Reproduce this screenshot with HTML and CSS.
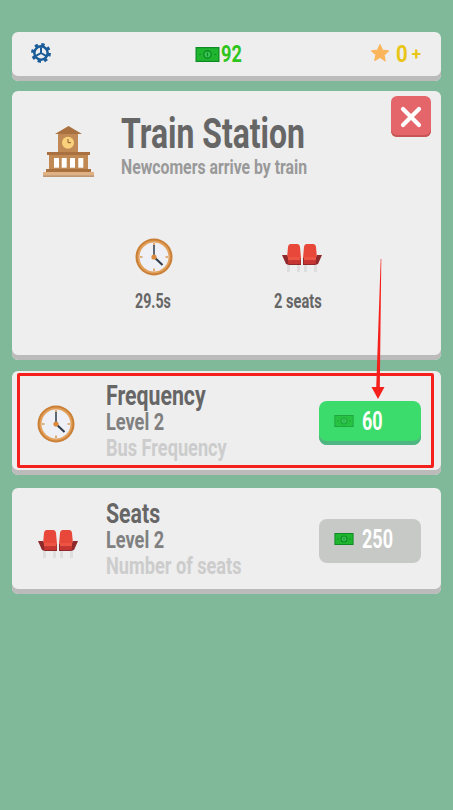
FILE: index.html
```html
<!DOCTYPE html>
<html lang="en">
<head>
  <meta charset="UTF-8" />
  <meta name="viewport" content="width=device-width, initial-scale=1.0"/>
  <title>Train Station</title>
  <link rel="stylesheet" href="styles.css">
</head>
<body>
  <!-- shared icons -->
  <svg class="defs" width="0" height="0">
    <symbol id="money" viewBox="0 0 24 15">
      <rect width="24" height="15" fill="#0f8a24"/>
      <rect x="1.2" y="1.2" width="21.6" height="12.600" fill="#1fb52f"/>
      <circle cx="12" cy="7.500" r="4.400" fill="#0f8a24"/>
      <circle cx="12" cy="7.500" r="3" fill="#38c653"/>
      <rect x="11.400" y="5.600" width="1.200" height="3.800" fill="#0f8a24"/>
      <circle cx="4.500" cy="7.500" r=".8" fill="#0f8a24"/>
      <circle cx="19.500" cy="7.500" r=".8" fill="#0f8a24"/>
    </symbol>
    <symbol id="clock" viewBox="0 0 38 38">
      <circle cx="19" cy="19" r="18.500" fill="#c97f35"/>
      <circle cx="19" cy="19" r="16.500" fill="#e2a05c"/>
      <circle cx="19" cy="19" r="14.500" fill="#eef0f6"/>
      <path d="M19 5v2.500M19 30.500V33M5 19h2.500M30.500 19H33" stroke="#d99a58" stroke-width="1.600"/>
      <path d="M19 19V7" stroke="#2f3a4a" stroke-width="1.500"/>
      <path d="M19 19l8.500 8" stroke="#2f3a4a" stroke-width="2"/>
      <circle cx="19" cy="19" r="2.600" fill="#d98a3c"/>
    </symbol>
    <symbol id="seats" viewBox="0 0 40 28">
      <g fill="#dedede">
        <rect x="5" y="19" width="3" height="9"/><rect x="15" y="19" width="3" height="9"/>
        <rect x="22" y="19" width="3" height="9"/><rect x="32" y="19" width="3" height="9"/>
      </g>
      <path d="M5 14L6 3q.4-3 3-3h6q2.600 0 3 3l1 11zM21 14l1-11q.4-3 3-3h6q2.600 0 3 3l1 11z" fill="#e8483a"/>
      <path d="M0 11h5l1 3h13v7H7l-3-1zM21 14h13l1-3h5l-4 9-3 1H21z" fill="#8f2a2c"/>
      <path d="M6 13h12.500v3.500H6zM22 13h12v3.500H22z" fill="#ee5443"/>
      <path d="M6 16.500h12.500V20H6.500zM22 16.500h12l-.5 3.500H22z" fill="#c73532"/>
    </symbol>
  </svg>

  <header class="topbar">
    <svg class="gear" viewBox="0 0 24 24">
      <g fill="none" stroke="#1a5c99">
        <circle cx="12" cy="12" r="10.200" stroke-width="3.400" stroke-dasharray="4 4.010"/>
        <circle cx="12" cy="12" r="8" stroke-width="3"/>
        <path d="M12 12V5M12 12l-6 3.500M12 12l6 3.500" stroke-width="2.400"/>
      </g>
    </svg>
    <div class="cash">
      <svg class="money-lg"><use href="#money"/></svg>
      <span class="cond">92</span>
    </div>
    <div class="stars">
      <svg class="star" viewBox="0 0 24 24"><path fill="#fbb65c" stroke="#fbb65c" stroke-width="1.500" stroke-linejoin="round" d="M12 2l3 6.600 7 .9-5.200 4.800 1.400 7.100L12 17l-6.200 3.900 1.400-7.100L2 9.500l7-.9z"/></svg>
      <span class="cond star-count">0</span>
      <span class="star-plus">+</span>
    </div>
  </header>

  <section class="card station">
    <button class="close">
      <svg viewBox="0 0 24 24"><path d="M4 4l16 16M20 4L4 20" stroke="#fff" stroke-width="4.200" stroke-linecap="round"/></svg>
    </button>
    <div class="station-head">
      <svg class="building" viewBox="0 0 51 51">
        <path d="M25.500 0L39 8H12z" fill="#a9713f"/>
        <rect x="15" y="8" width="20" height="18" fill="#c18a55"/>
        <circle cx="25" cy="16.700" r="6" fill="#fbd27c"/>
        <path d="M25 13v3.700h3" stroke="#8a5a2e" stroke-width="1" fill="none"/>
        <rect x="4" y="26" width="43" height="3" fill="#a9713f"/>
        <rect x="6" y="29" width="39" height="14" fill="#c18a55"/>
        <g fill="#fff">
          <rect x="11" y="32" width="5" height="9.700"/><rect x="18.700" y="32" width="5" height="9.700"/>
          <rect x="27" y="32" width="5" height="9.700"/><rect x="35.300" y="32" width="5" height="9.700"/>
        </g>
        <rect x="3" y="43" width="45" height="3" fill="#a9713f"/>
        <rect y="46" width="51" height="3.500" fill="#e0b183"/>
        <rect y="49.500" width="51" height="1.200" fill="#a9713f"/>
      </svg>
      <div class="head-text">
        <h1 class="cond">Train Station</h1>
        <p class="cond subtitle">Newcomers arrive by train</p>
      </div>
    </div>
    <div class="stats">
      <div class="stat">
        <svg class="stat-clock"><use href="#clock"/></svg>
        <span class="cond stat-time">29.5s</span>
      </div>
      <div class="stat">
        <svg class="stat-seats"><use href="#seats"/></svg>
        <span class="cond stat-count">2 seats</span>
      </div>
    </div>
  </section>

  <section class="card upgrade upgrade-first">
    <svg class="row-clock"><use href="#clock"/></svg>
    <div class="info">
      <h2 class="cond">Frequency</h2>
      <p class="cond level">Level 2</p>
      <p class="cond desc">Bus Frequency</p>
    </div>
    <button class="buy buy-on">
      <svg class="money-sm dim"><use href="#money"/></svg>
      <span class="cond">60</span>
    </button>
    <div class="highlight"></div>
  </section>

  <section class="card upgrade">
    <svg class="row-seats"><use href="#seats"/></svg>
    <div class="info">
      <h2 class="cond">Seats</h2>
      <p class="cond level">Level 2</p>
      <p class="cond desc">Number of seats</p>
    </div>
    <button class="buy buy-off">
      <svg class="money-sm"><use href="#money"/></svg>
      <span class="cond">250</span>
    </button>
  </section>

  <!-- annotation arrow over the cards -->
  <svg class="arrow" width="20" height="142" viewBox="0 0 20 142">
    <path d="M11.700 0h.6L10.800 129H7.200z" fill="#f5201c"/>
    <path d="M2.500 128h13L9 140z" fill="#f5201c"/>
  </svg>
</body>
</html>
```

FILE: styles.css
```css
:root {
  --bg: #7fb999;
  --card: #eeeeee;
  --edge: #bbbbbb;
  --ink: #666666;
  --red: #f5201c;
}
* { box-sizing: border-box; margin: 0; padding: 0; }
body {
  position: relative;
  min-height: 810px;
  padding: 32px 12px 0;
  background: var(--bg);
  font-family: "Roboto", sans-serif;
  font-weight: 700;
  color: var(--ink);
  overflow: hidden;
}
.defs { position: absolute; }

/* no condensed face is installed, so the text is squeezed sideways */
.cond {
  display: block;
  width: max-content;
  transform: scaleX(.76);
  transform-origin: left center;
  white-space: nowrap;
}

.topbar {
  display: flex;
  align-items: center;
  height: 49px;
  padding: 0 21px 5px 19px;
  background: var(--card);
  border-radius: 6px;
  box-shadow: inset 0 -5px var(--edge);
}
.gear { width: 20px; height: 20px; margin-bottom: 3px; }
.cash {
  display: flex;
  align-items: center;
  gap: 1px;
  margin-left: 144px;
  font-size: 24px;
  color: #2fc51d;
}
.money-lg { width: 25px; height: 15px; }
.stars { display: flex; align-items: center; width: 50px; margin-left: auto; }
.star { width: 20px; height: 20px; margin: 0 6px 3px 0; flex: none; }
.star-count { font-size: 24px; color: #e9c516; transform: scaleX(.85); }
.star-plus { margin-left: 2px; font-size: 17px; color: #e9c516; }

.card {
  position: relative;
  background: var(--card);
  border-radius: 6px;
  box-shadow: inset 0 -5px var(--edge);
}
.station { height: 269px; margin-top: 10px; padding: 24px 0 0 31px; }
.close {
  position: absolute;
  top: 5px;
  right: 10px;
  width: 40px;
  height: 41px;
  padding: 8px;
  border: none;
  border-radius: 6px;
  background: #e4666a;
  box-shadow: inset 0 -2px #c95456;
}
.close svg { display: block; width: 24px; height: 24px; }
.station-head { display: flex; gap: 27px; }
.building { width: 51px; height: 51px; margin-top: 11px; flex: none; }
.head-text { margin-top: -1px; }
h1 { font-size: 42px; line-height: 40px; transform: scaleX(.78); }
.subtitle { margin-top: 1px; font-size: 20px; line-height: 24px; color: #999999; transform: scaleX(.79); }
.stats {
  display: grid;
  grid-template-columns: 139px 100px;
  margin: 59px 0 0 92px;
}
.stat { display: flex; flex-direction: column; width: 36px; gap: 13px; font-size: 20px; }
.stat-time { transform: scaleX(.71); }
.stat-count { transform: scaleX(.73); }
.stat-clock { width: 38px; height: 38px; }
.stat-seats { width: 40px; height: 28px; margin: 6px 0 4px 8px; }

.upgrade {
  display: flex;
  align-items: center;
  height: 104px;
  margin-top: 11px;
  padding: 0 20px 5px 25px;
}
.upgrade + .upgrade { height: 106px; margin-top: 13px; }
.row-clock { width: 38px; height: 38px; margin: 6px 31px 0 0; flex: none; }
.row-seats { width: 40px; height: 28px; margin: 10px 28px 0 1px; flex: none; }
.info { flex: 1; margin-top: 3px; }
h2 { margin-bottom: 1px; font-size: 28px; line-height: 26px; }
.level { font-size: 23px; line-height: 26px; color: #808080; transform: scaleX(.79); }
.desc { font-size: 23px; line-height: 26px; color: #cccccc; transform: scaleX(.79); }
.buy {
  display: flex;
  align-items: center;
  gap: 8px;
  width: 102px;
  height: 44px;
  margin-top: 4px;
  padding: 0 15px 3px;
  border: none;
  border-radius: 8px;
  font: inherit;
  font-size: 25px;
  color: #fff;
}
.buy .cond { transform: scaleX(.72); }
.buy-on { background: #3bdc6b; box-shadow: inset 0 -4px #4fb583; }
.buy-off { background: #c6c9c6; }
.money-sm { width: 20px; height: 12px; flex: none; }
.dim { opacity: .65; }
.highlight {
  position: absolute;
  top: 2px;
  left: 5px;
  right: 7px;
  bottom: 7px;
  border: 3px solid var(--red);
  border-radius: 2px;
}
.arrow { position: absolute; top: 259px; left: 369px; }
```
